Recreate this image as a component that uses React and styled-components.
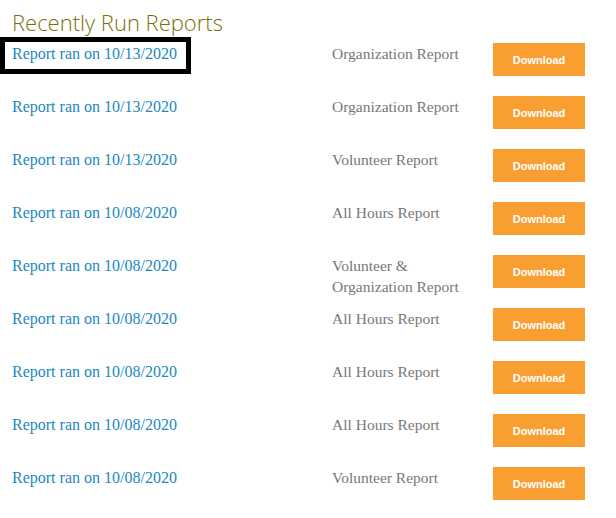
import React from "react";
import styled, { createGlobalStyle } from "styled-components";

const GlobalStyle = createGlobalStyle`
  body {
    margin: 0;
    background: #fff;
  }
`;

const Page = styled.div`
  padding: 7px 12px;
`;

const Title = styled.h2`
  margin: 0;
  font-family: "Open Sans", sans-serif;
  font-weight: 300;
  font-size: 22px;
  line-height: 30px;
  color: #7b6e0c;
`;

const List = styled.div`
  margin-top: 6px;
`;

const Row = styled.div`
  display: grid;
  grid-template-columns: 320px 161px 92px;
  align-items: start;
  height: 53px;
`;

const ReportLink = styled.a`
  position: relative;
  display: inline-block;
  font-family: "Liberation Serif", serif;
  font-size: 16px;
  line-height: 21px;
  color: #2188c0;
  text-decoration: none;

  ${({ $highlight }) =>
    $highlight &&
    `
    &::after {
      content: "";
      position: absolute;
      top: -6px;
      left: -12px;
      right: -14px;
      bottom: -10px;
      border: 5px solid #000;
    }
  `}
`;

const ReportType = styled.div`
  font-family: "Liberation Serif", serif;
  font-size: 15.5px;
  line-height: 21px;
  color: #777;
  padding-right: 8px;
`;

const DownloadButton = styled.button`
  display: flex;
  align-items: center;
  justify-content: center;
  width: 92px;
  height: 33px;
  padding: 0;
  border: none;
  background: #f99f31;
  color: #fff;
  font-family: "Liberation Sans", Arial, sans-serif;
  font-weight: bold;
  font-size: 11px;
  cursor: pointer;
`;

const reports = [
  { date: "10/13/2020", type: "Organization Report" },
  { date: "10/13/2020", type: "Organization Report" },
  { date: "10/13/2020", type: "Volunteer Report" },
  { date: "10/08/2020", type: "All Hours Report" },
  { date: "10/08/2020", type: "Volunteer & Organization Report" },
  { date: "10/08/2020", type: "All Hours Report" },
  { date: "10/08/2020", type: "All Hours Report" },
  { date: "10/08/2020", type: "All Hours Report" },
  { date: "10/08/2020", type: "Volunteer Report" },
];

const App = () => {
  return (
    <Page>
      <GlobalStyle />
      <Title>Recently Run Reports</Title>
      <List>
        {reports.map((r, i) => (
          <Row key={i}>
            <div>
              <ReportLink href="#" $highlight={i === 0}>
                Report ran on {r.date}
              </ReportLink>
            </div>
            <ReportType>{r.type}</ReportType>
            <DownloadButton>Download</DownloadButton>
          </Row>
        ))}
      </List>
    </Page>
  );
};

export default App;
